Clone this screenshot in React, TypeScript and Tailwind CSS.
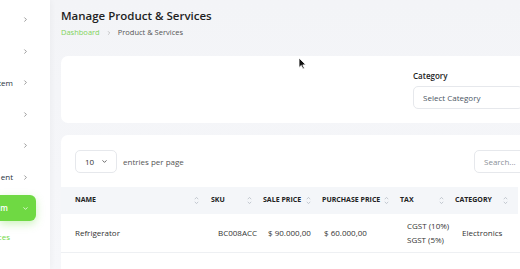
import { ChevronRight, ChevronDown } from 'lucide-react'

const sideRows = ['', '', 'tem', '', '', 'ent']

const cols = [
    { label: 'NAME', w: 'w-[143px]', hp: 'pl-[14px]', bp: 'pl-[14px]' },
    { label: 'SKU', w: 'w-[53px]', hp: 'pl-[7px]', bp: 'pl-[14px]' },
    { label: 'SALE PRICE', w: 'w-[59px]', hp: 'pl-[6px]', bp: 'pl-[11px]' },
    { label: 'PURCHASE PRICE', w: 'w-[78px]', hp: 'pl-[6px]', bp: 'pl-[8px]' },
    { label: 'TAX', w: 'w-[55px]', hp: 'pl-[6px]', bp: 'pl-[13px]' },
    { label: 'CATEGORY', w: 'w-[64px]', hp: 'pl-[6px]', bp: 'pl-[13px]' },
]

const rows = [
    ['Refrigerator', 'BC008ACC', '$ 90.000,00', '$ 60.000,00', ['CGST (10%)', 'SGST (5%)'], 'Electronics'],
    ['Projector', 'BC0012LB', '$ 150,00', '$ 150,00', ['CGST (5%)'], 'Electronics'],
]

function SortIcon() {
    return (
        <svg width="5" height="9" viewBox="0 0 5 9" className="shrink-0 text-[#b8bec7]">
            <path d="M0.8 3.2 L2.5 1.4 L4.2 3.2" fill="none" stroke="currentColor" strokeWidth="0.8" />
            <path d="M0.8 5.8 L2.5 7.6 L4.2 5.8" fill="none" stroke="currentColor" strokeWidth="0.8" />
        </svg>
    )
}

export default function App() {
    return (
        <div className="relative flex h-[269px] w-[520px] overflow-hidden bg-[#f5f6f9] font-['Open_Sans',sans-serif] text-[#293240]">

            {/* Sidebar */}
            <aside className="z-10 flex w-[50px] shrink-0 flex-col overflow-hidden bg-white pt-[4px] shadow-[1px_0_6px_rgba(0,0,0,0.04)]">
                {sideRows.map((t, i) => (
                    <div key={i} className="flex h-[31.5px] items-center justify-end gap-[9px] pr-[21px] text-[8px] text-[#293240]">
                        <span className="whitespace-nowrap">{t}</span>
                        <ChevronRight size={7} strokeWidth={2} className="shrink-0 text-[#555]" />
                    </div>
                ))}
                <div className="mt-[2px] flex h-[26px] w-[36px] items-center justify-end gap-[14px] rounded-r-[6px] bg-[#6fd943] pr-[7px] text-[8px] font-semibold text-white shadow-[0_3px_8px_rgba(111,217,67,0.35)]">
                    <span className="whitespace-nowrap">m</span>
                    <ChevronDown size={7} strokeWidth={2.5} className="shrink-0" />
                </div>
                <div className="mt-[8px] flex h-[16px] items-center justify-end pr-[40px] text-[8px] text-[#6fd943]">
                    <span className="whitespace-nowrap">ces</span>
                </div>
            </aside>

            {/* Main */}
            <main className="min-w-0 flex-1 bg-gradient-to-b from-[#f3f4f7] to-[#f6f7fa] pl-[11px] pt-[7px]">
                <h1 className="text-[11.5px] leading-[17px] font-semibold text-[#1f1f1f]">Manage Product &amp; Services</h1>
                <div className="mt-[3px] flex items-center gap-[6px] text-[7.5px] leading-[11px] text-[#555]">
                    <span className="text-[#7fd35a]">Dashboard</span>
                    <ChevronRight size={6} strokeWidth={2} className="text-[#999]" />
                    <span>Product &amp; Services</span>
                </div>

                {/* Filter card */}
                <div className="mt-[18px] flex h-[67px] w-[480px] justify-end rounded-[7px] bg-white pr-[18px] pt-[14px]">
                    <div className="w-[110px]">
                        <div className="text-[8px] leading-[12px] font-semibold text-[#222]">Category</div>
                        <div className="mt-[4px] flex h-[23px] items-center rounded-[5px] border border-[#e6e8ec] pl-[9px] text-[8px] text-[#4b5563]">
                            Select Category
                        </div>
                    </div>
                </div>

                {/* Table card */}
                <div className="mt-[12px] w-[480px] rounded-[7px] bg-white">
                    <div className="flex items-center justify-between px-[14px] pt-[15px] pb-[14px]">
                        <div className="flex items-center gap-[6px]">
                            <div className="flex h-[23px] w-[42px] items-center justify-between rounded-[5px] border border-[#e6e8ec] pl-[9px] pr-[8px] text-[8px] text-[#333]">
                                <span>10</span>
                                <ChevronDown size={7} strokeWidth={2.5} className="text-[#333]" />
                            </div>
                            <span className="text-[8px] text-[#555]">entries per page</span>
                        </div>
                        <div className="mr-[-7px] flex h-[23px] w-[60px] items-center rounded-[5px] border border-[#e6e8ec] pl-[9px] text-[8px] text-[#8a8f98]">
                            Search...
                        </div>
                    </div>

                    <div className="flex h-[27px] w-[457px] items-center bg-[#f4f6f9]">
                        {cols.map((c) => (
                            <div key={c.label} className={`flex shrink-0 items-center justify-between pr-[5px] ${c.w} ${c.hp}`}>
                                <span className="whitespace-nowrap text-[7px] font-bold text-[#222]">{c.label}</span>
                                <SortIcon />
                            </div>
                        ))}
                    </div>

                    {rows.map((r, i) => (
                        <div key={i} className="flex h-[39px] items-center border-b border-[#eef0f3] text-[8px] text-[#333]">
                            {cols.map((c, j) => (
                                <div key={j} className={`shrink-0 whitespace-nowrap ${c.w} ${c.bp}`}>
                                    {Array.isArray(r[j])
                                        ? (r[j] as string[]).map((t) => <div key={t} className="leading-[14px]">{t}</div>)
                                        : r[j]}
                                </div>
                            ))}
                        </div>
                    ))}
                </div>
            </main>

            {/* Cursor */}
            <svg width="9" height="13" viewBox="0 0 9 13" className="absolute left-[298px] top-[57px]">
                <path d="M1 1 L1 10.5 L3.3 8.4 L5 12 L6.4 11.3 L4.8 7.9 L7.8 7.8 Z" fill="#111" stroke="#fff" strokeWidth="0.8" />
            </svg>
        </div>
    )
}
